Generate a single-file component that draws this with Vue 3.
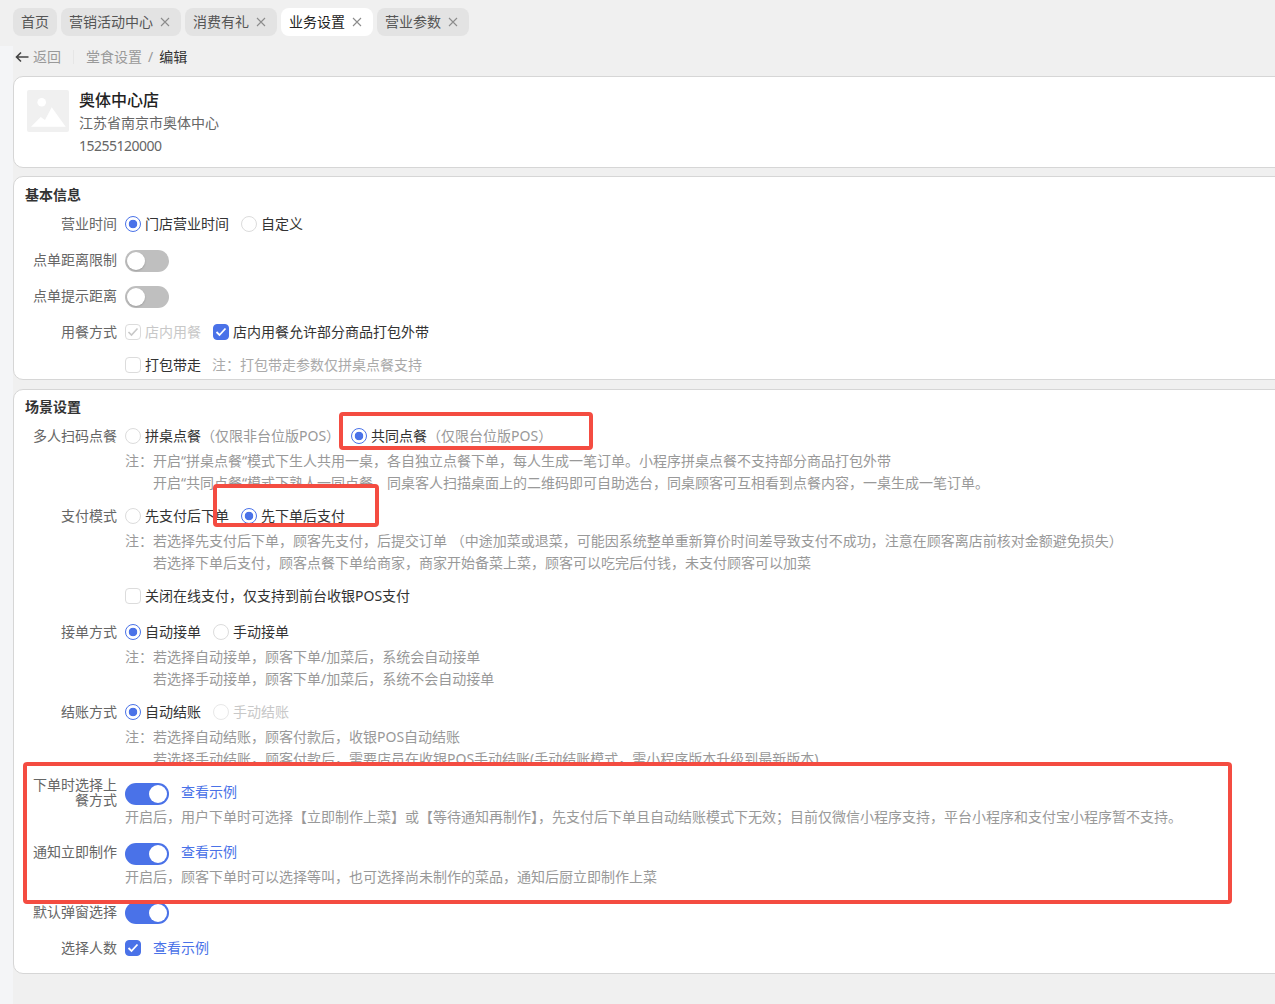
<script setup>
const tabs = [
  { name: '首页', closable: false },
  { name: '营销活动中心', closable: true },
  { name: '消费有礼', closable: true },
  { name: '业务设置', closable: true, active: true },
  { name: '营业参数', closable: true }
]
</script>

<template>
  <div class="page">
    <div class="tabs">
      <div v-for="t in tabs" :key="t.name" class="tab" :class="{ active: t.active }">
        <span>{{ t.name }}</span>
        <svg v-if="t.closable" class="close" width="10" height="10" viewBox="0 0 10 10"><path d="M1 1l8 8M9 1l-8 8" stroke="currentColor" stroke-width="1.1" fill="none"/></svg>
      </div>
    </div>

    <div class="body">
      <div class="strip"></div>
      <main class="main">
        <div class="crumbs">
          <svg class="back-arrow" width="14" height="12" viewBox="0 0 14 12"><path d="M13.5 6H1.5M6 1.5L1.5 6 6 10.5" stroke="#444" stroke-width="1.6" fill="none"/></svg>
          <span class="back">返回</span>
          <span class="sep"></span>
          <span class="crumb">堂食设置</span>
          <span class="slash">/</span>
          <span class="crumb-now">编辑</span>
        </div>

        <section class="card store">
          <div class="thumb">
            <svg width="42" height="42" viewBox="0 0 42 42"><circle cx="14.7" cy="12.3" r="4.3" fill="#fff"/><path d="M4 36.7L13.7 27l4.3 3 6.7-12.7 14 19.4z" fill="#fff"/></svg>
          </div>
          <div class="store-info">
            <div class="store-name">奥体中心店</div>
            <div class="store-line">江苏省南京市奥体中心</div>
            <div class="store-line phone">15255120000</div>
          </div>
        </section>

        <section class="card basic">
          <h3 class="title">基本信息</h3>
          <div class="row">
            <label class="label">营业时间</label>
            <span class="radio on"></span><span class="opt">门店营业时间</span>
            <span class="radio"></span><span class="opt">自定义</span>
          </div>
          <div class="row">
            <label class="label">点单距离限制</label>
            <span class="toggle"></span>
          </div>
          <div class="row">
            <label class="label">点单提示距离</label>
            <span class="toggle"></span>
          </div>
          <div class="row">
            <label class="label">用餐方式</label>
            <span class="check disabled"><svg width="12" height="10" viewBox="0 0 12 10"><path d="M1.5 5l3 3 6-6.5" stroke="#c8c8c8" stroke-width="1.6" fill="none"/></svg></span>
            <span class="opt muted">店内用餐</span>
            <span class="check on"><svg width="12" height="10" viewBox="0 0 12 10"><path d="M1.5 5l3 3 6-6.5" stroke="#fff" stroke-width="1.8" fill="none"/></svg></span>
            <span class="opt">店内用餐允许部分商品打包外带</span>
          </div>
          <div class="row short">
            <label class="label"></label>
            <span class="check"></span><span class="opt">打包带走</span>
            <span class="hint">注：打包带走参数仅拼桌点餐支持</span>
          </div>
        </section>

        <section class="card scene">
          <h3 class="title">场景设置</h3>
          <div class="row">
            <label class="label">多人扫码点餐</label>
            <span class="radio"></span><span class="opt tight">拼桌点餐<em>（仅限非台位版POS）</em></span>
            <span class="radio on"></span><span class="opt">共同点餐<em>（仅限台位版POS）</em></span>
          </div>
          <div class="note">
            <p>注：开启“拼桌点餐“模式下生人共用一桌，各自独立点餐下单，每人生成一笔订单。小程序拼桌点餐不支持部分商品打包外带</p>
            <p>开启“共同点餐“模式下熟人一同点餐，同桌客人扫描桌面上的二维码即可自助选台，同桌顾客可互相看到点餐内容，一桌生成一笔订单。</p>
          </div>
          <div class="row">
            <label class="label">支付模式</label>
            <span class="radio"></span><span class="opt">先支付后下单</span>
            <span class="radio on"></span><span class="opt">先下单后支付</span>
          </div>
          <div class="note">
            <p>注：若选择先支付后下单，顾客先支付，后提交订单 （中途加菜或退菜，可能因系统整单重新算价时间差导致支付不成功，注意在顾客离店前核对金额避免损失）</p>
            <p>若选择下单后支付，顾客点餐下单给商家，商家开始备菜上菜，顾客可以吃完后付钱，未支付顾客可以加菜</p>
          </div>
          <div class="row">
            <label class="label"></label>
            <span class="check"></span><span class="opt">关闭在线支付，仅支持到前台收银POS支付</span>
          </div>
          <div class="row">
            <label class="label">接单方式</label>
            <span class="radio on"></span><span class="opt">自动接单</span>
            <span class="radio"></span><span class="opt">手动接单</span>
          </div>
          <div class="note">
            <p>注：若选择自动接单，顾客下单/加菜后，系统会自动接单</p>
            <p>若选择手动接单，顾客下单/加菜后，系统不会自动接单</p>
          </div>
          <div class="row">
            <label class="label">结账方式</label>
            <span class="radio on"></span><span class="opt">自动结账</span>
            <span class="radio off"></span><span class="opt muted">手动结账</span>
          </div>
          <div class="note">
            <p>注：若选择自动结账，顾客付款后，收银POS自动结账</p>
            <p>若选择手动结账，顾客付款后，需要店员在收银POS手动结账(手动结账模式，需小程序版本升级到最新版本)</p>
          </div>

          <div class="boxed">
            <div class="row">
              <label class="label two-line">下单时选择上餐方式</label>
              <span class="toggle active low"></span>
              <a class="link">查看示例</a>
            </div>
            <div class="note plain"><p>开启后，用户下单时可选择【立即制作上菜】或【等待通知再制作】，先支付后下单且自动结账模式下无效；目前仅微信小程序支持，平台小程序和支付宝小程序暂不支持。</p></div>
            <div class="row second">
              <label class="label">通知立即制作</label>
              <span class="toggle active low"></span>
              <a class="link">查看示例</a>
            </div>
            <div class="note plain"><p>开启后，顾客下单时可以选择等叫，也可选择尚未制作的菜品，通知后厨立即制作上菜</p></div>
          </div>

          <div class="row">
            <label class="label">默认弹窗选择</label>
            <span class="toggle active"></span>
          </div>
          <div class="row">
            <label class="label">选择人数</label>
            <span class="check on"><svg width="12" height="10" viewBox="0 0 12 10"><path d="M1.5 5l3 3 6-6.5" stroke="#fff" stroke-width="1.8" fill="none"/></svg></span>
            <a class="link">查看示例</a>
          </div>
        </section>
      </main>
    </div>

    <div class="mark mark-a"></div>
    <div class="mark mark-b"></div>
  </div>
</template>

<style>
html, body { margin: 0; background: #f0f0f0; overflow: hidden; }
</style>

<style scoped>
.page {
  position: relative;
  height: 1004px;
  overflow: hidden;
  background: #f0f0f0;
  font-family: "Noto Sans", "Noto Sans CJK SC", sans-serif;
  font-size: 14px;
  color: #333;
}
.tabs { display: flex; gap: 4px; padding: 8px 13px 0; height: 46px; box-sizing: border-box; }
.tab {
  display: flex; align-items: center; gap: 7px;
  height: 28px; padding: 0 8px; box-sizing: border-box;
  border-radius: 8px; background: #e3e3e3; color: #555; line-height: 28px;
}
.tab:has(.close) { padding-right: 11px; }
.tab.active { background: #fff; color: #222; }
.close { color: #8c8c8c; }
.body { display: flex; height: 958px; }
.strip { width: 13px; flex: none; background: #f4f5f7; }
.main { flex: 1; min-width: 0; margin-right: -20px; }
.crumbs { display: flex; align-items: center; height: 22px; margin-bottom: 8px; line-height: 22px; }
.back-arrow { margin-left: 2px; }
.back { margin-left: 4px; color: #999; }
.sep { width: 1px; height: 14px; margin: 0 12px; background: #e6e6e6; }
.crumb { color: #999; }
.slash { margin: 0 6px; color: #999; }
.crumb-now { color: #333; }

.card {
  box-sizing: border-box;
  background: #fff;
  border: 1px solid #d6d6d6;
  border-radius: 10px;
}
.store { display: flex; height: 92px; margin-bottom: 8px; padding: 13px; }
.thumb { width: 42px; height: 42px; border-radius: 2px; background: #f0f0f0; flex: none; }
.store-info { margin-left: 10px; margin-top: -1px; }
.store-name { font-size: 16px; line-height: 22px; color: #222; height: 22px; font-weight: 500; }
.store-line { line-height: 23px; color: #666; }
.phone { letter-spacing: -0.5px; }

.basic { height: 204px; margin-bottom: 9px; padding-top: 7px; }
.scene { height: 585px; padding-top: 6px; }
.title { margin: 0; padding-left: 11px; font-size: 14px; line-height: 22px; font-weight: 700; color: #333; }

.row { display: flex; align-items: center; min-height: 36px; padding-left: 19px; }
.row.short { min-height: 30px; }
.label { width: 84px; margin-right: 8px; flex: none; text-align: right; color: #666; line-height: 15px; padding-bottom: 2px; }
.label.two-line { padding-bottom: 0; }
.opt { margin-left: 4px; margin-right: 12px; color: #333; white-space: nowrap; padding-bottom: 2px; }
.opt.tight { margin-right: 11px; }
.opt em { font-style: normal; color: #999; }
.muted { color: #c8c8c8; }
.hint { margin-left: -1px; color: #aaa; padding-bottom: 2px; }

.radio {
  width: 16px; height: 16px; box-sizing: border-box; flex: none;
  border: 1px solid #dcdcdc; border-radius: 50%; background: #fff;
}
.radio.on { border-color: #4a72e8; background: radial-gradient(circle, #4a72e8 0 4px, #fff 4.6px); }
.radio.off { border-color: #e8e8e8; }

.check {
  display: flex; align-items: center; justify-content: center;
  width: 16px; height: 16px; box-sizing: border-box; flex: none;
  border: 1px solid #dcdcdc; border-radius: 4px; background: #fff;
}
.check.on { border-color: #4a72e8; background: #4a72e8; }

.toggle {
  position: relative; width: 44px; height: 22px; flex: none; margin-top: 2px;
  border-radius: 11px; background: #bfbfbf;
}
.toggle::after {
  content: ""; position: absolute; left: 2px; top: 2px;
  width: 18px; height: 18px; border-radius: 50%; background: #fff;
  box-shadow: 0 1px 2px rgba(0, 0, 0, .18);
}
.toggle.active { background: #4a72e8; }
.toggle.active::after { left: 24px; box-shadow: none; }
.toggle.low { margin-top: 4px; }

.link { margin-left: 12px; color: #4a72e8; padding-bottom: 2px; }

.note { margin: -4px 0 4px; padding-left: 111px; color: #999; line-height: 22px; white-space: nowrap; }
.note p { margin: 0; padding-left: 28px; }
.note p:first-child { padding-left: 0; }
.note.plain p { padding-left: 0; }

.boxed {
  position: relative; z-index: 1;
  box-sizing: border-box;
  width: 1209px; height: 142px;
  margin: -12px 0 -10px 9px;
  padding-top: 8px;
  border: 4px solid #f44c41;
  border-radius: 4px;
  background: #fff;
}
.boxed .row { padding-left: 6px; }
.boxed .row.second { margin-top: 6px; }
.boxed .note { padding-left: 98px; }

.mark { position: absolute; box-sizing: border-box; border: 4px solid #f44c41; border-radius: 4px; z-index: 2; }
.mark-a { left: 339px; top: 412px; width: 254px; height: 38px; }
.mark-b {
  left: 213px; top: 484px; width: 166px; height: 43px;
  background: linear-gradient(#fff 0 10px, transparent 10px);
}
</style>
